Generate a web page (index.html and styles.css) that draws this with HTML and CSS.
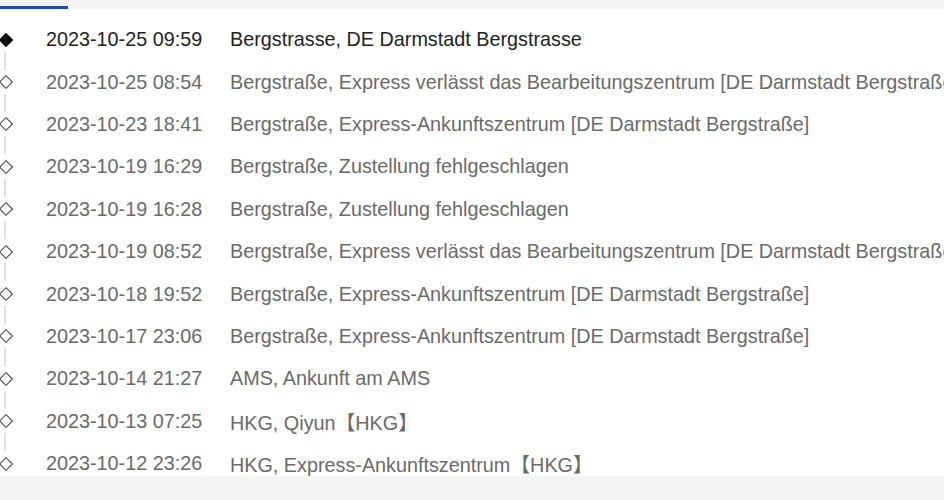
FILE: index.html
```html
<!DOCTYPE html>
<html>
<head>
<meta charset="utf-8">
<link rel="stylesheet" href="styles.css">
</head>
<body>
<div class="page">
  <div class="tabs"><div class="tab-active"></div></div>
  <div class="panel">
    <ul class="timeline">
      <li class="event current"><span class="dot"></span><span class="time">2023-10-25 09:59</span><span class="desc">Bergstrasse, DE Darmstadt Bergstrasse</span></li>
      <li class="event"><span class="dot"></span><span class="time">2023-10-25 08:54</span><span class="desc">Bergstraße, Express verlässt das Bearbeitungszentrum [DE Darmstadt Bergstraße]</span></li>
      <li class="event"><span class="dot"></span><span class="time">2023-10-23 18:41</span><span class="desc">Bergstraße, Express-Ankunftszentrum [DE Darmstadt Bergstraße]</span></li>
      <li class="event"><span class="dot"></span><span class="time">2023-10-19 16:29</span><span class="desc">Bergstraße, Zustellung fehlgeschlagen</span></li>
      <li class="event"><span class="dot"></span><span class="time">2023-10-19 16:28</span><span class="desc">Bergstraße, Zustellung fehlgeschlagen</span></li>
      <li class="event"><span class="dot"></span><span class="time">2023-10-19 08:52</span><span class="desc">Bergstraße, Express verlässt das Bearbeitungszentrum [DE Darmstadt Bergstraße]</span></li>
      <li class="event"><span class="dot"></span><span class="time">2023-10-18 19:52</span><span class="desc">Bergstraße, Express-Ankunftszentrum [DE Darmstadt Bergstraße]</span></li>
      <li class="event"><span class="dot"></span><span class="time">2023-10-17 23:06</span><span class="desc">Bergstraße, Express-Ankunftszentrum [DE Darmstadt Bergstraße]</span></li>
      <li class="event"><span class="dot"></span><span class="time">2023-10-14 21:27</span><span class="desc">AMS, Ankunft am AMS</span></li>
      <li class="event"><span class="dot"></span><span class="time">2023-10-13 07:25</span><span class="desc">HKG, Qiyun【HKG】</span></li>
      <li class="event last"><span class="dot"></span><span class="time">2023-10-12 23:26</span><span class="desc">HKG, Express-Ankunftszentrum【HKG】</span></li>
    </ul>
  </div>
  <div class="footer"></div>
</div>
</body>
</html>
```
FILE: styles.css
```css
html, body {
  margin: 0;
  padding: 0;
  background: #f4f4f4;
}
body {
  font-family: "Liberation Sans", Arial, "Noto Sans CJK SC", sans-serif;
  width: 944px;
  height: 500px;
  overflow: hidden;
}
.page {
  display: flex;
  flex-direction: column;
  height: 500px;
}
.tabs {
  height: 9px;
  background: #f4f4f4;
  display: flex;
  align-items: flex-end;
}
.tab-active {
  width: 68px;
  height: 3px;
  background: #1d4fa8;
}
.panel {
  height: 467px;
  background: #fff;
  overflow: hidden;
}
.timeline {
  list-style: none;
  margin: 0;
  padding: 9.5px 0 0 0;
}
.event {
  position: relative;
  display: flex;
  align-items: center;
  height: 42.4px;
  font-size: 19.8px;
  color: #6a6a6a;
  white-space: nowrap;
}
.event.current {
  color: #222;
}
.event::after {
  content: "";
  position: absolute;
  left: 4px;
  top: 33px;
  width: 2px;
  height: 18px;
  background: #e0e0e0;
}
.event.last::after {
  display: none;
}
.dot {
  flex: none;
  width: 10px;
  height: 10px;
  margin-left: 1px;
  margin-right: 35px;
  box-sizing: border-box;
  border: 1px solid #333;
  background: #fff;
  transform: rotate(45deg);
}
.current .dot {
  background: #111;
  border-color: #111;
}
.time {
  flex: none;
  width: 184px;
}
.desc {
  flex: none;
}
.footer {
  flex: 1;
  background: #f4f4f4;
}
```
